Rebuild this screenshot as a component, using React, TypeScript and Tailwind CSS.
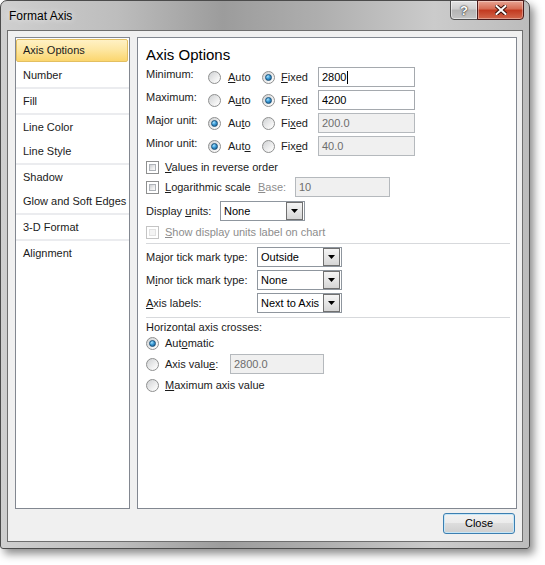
import React from 'react';

// underline the access key of a label, Windows style
const Acc = ({ text, k }: { text: string; k: number }) => (
  <span>
    {text.slice(0, k)}
    <span className="underline underline-offset-[1px]">{text[k]}</span>
    {text.slice(k + 1)}
  </span>
);

const Radio = ({ checked }: { checked?: boolean }) => (
  <span className="inline-flex w-[13px] h-[13px] shrink-0 items-center justify-center rounded-full border border-[#8e8f8f] bg-[linear-gradient(135deg,#cfd1d3_0%,#f4f4f4_70%,#ffffff_100%)]">
    {checked && (
      <span className="w-[7px] h-[7px] rounded-full border border-[#17507a] bg-[radial-gradient(circle_at_35%_30%,#a8e4ff_0%,#3a9ad6_45%,#124f80_100%)]" />
    )}
  </span>
);

const Check = ({ disabled }: { disabled?: boolean }) => (
  <span
    className={`inline-flex w-[13px] h-[13px] shrink-0 p-[2px] border bg-white ${
      disabled ? 'border-[#c4c4c4]' : 'border-[#8e8f8f]'
    }`}
  >
    <span
      className={`w-full h-full ${
        disabled
          ? 'bg-[#f4f4f4] border border-[#e2e2e2]'
          : 'border border-[#aeb2b8] bg-[linear-gradient(135deg,#cdd0d4_0%,#eeeeee_60%,#fbfbfb_100%)]'
      }`}
    />
  </span>
);

const TextBox = ({ value, w, disabled, caret }: { value: string; w: string; disabled?: boolean; caret?: boolean }) => (
  <div
    className={`${w} h-[20px] flex items-center pl-[3px] border ${
      disabled ? 'bg-[#f0f0f0] border-[#b5b9bd] text-[#6d6d6d]' : 'bg-white border-[#a5a9ae] text-black'
    }`}
  >
    {value}
    {caret && <span className="ml-[1px] w-px h-[13px] bg-black" />}
  </div>
);

const Combo = ({ value }: { value: string }) => (
  <div className="w-[85px] h-[20px] flex items-center border border-[#8f969e] bg-white">
    <span className="flex-1 pl-[3px] text-black">{value}</span>
    <span className="w-[17px] h-[18px] mr-px flex items-center justify-center border border-[#707070] bg-[linear-gradient(#f4f4f4_0%,#e6e6e6_50%,#d6d6d6_100%)]">
      <svg width="7" height="4" viewBox="0 0 7 4">
        <path d="M0 0h7L3.5 4z" fill="#000" />
      </svg>
    </span>
  </div>
);

const navItems: { name: string; sep?: boolean }[] = [
  { name: 'Axis Options' },
  { name: 'Number', sep: true },
  { name: 'Fill', sep: true },
  { name: 'Line Color' },
  { name: 'Line Style', sep: true },
  { name: 'Shadow' },
  { name: 'Glow and Soft Edges', sep: true },
  { name: '3-D Format', sep: true },
  { name: 'Alignment' },
];

const MinMaxRow = ({
  label,
  autoKey,
  fixedKey,
  fixed,
  value,
}: {
  label: string;
  autoKey: number;
  fixedKey: number;
  fixed: boolean;
  value: string;
}) => (
  <div className="flex items-center h-[20px] mt-[3px]">
    <span className="w-[62px] pb-[6px]">{label}</span>
    <div className="w-[54px] flex items-center">
      <Radio checked={!fixed} />
      <span className="ml-[7px]">
        <Acc text="Auto" k={autoKey} />
      </span>
    </div>
    <div className="w-[56px] flex items-center">
      <Radio checked={fixed} />
      <span className="ml-[6px]">
        <Acc text="Fixed" k={fixedKey} />
      </span>
    </div>
    <TextBox value={value} w="w-[97px]" disabled={!fixed} caret={value === '2800'} />
  </div>
);

export default function App() {
  return (
    <div className="w-[545px] h-[565px] bg-white font-[family-name:'Liberation_Sans',Arial,sans-serif] text-[11px] text-[#1b1b1b] leading-none">
      <div className="w-[530px] h-[549px] flex flex-col rounded-t-[7px] rounded-b-[3px] border border-[#4b4b4b] shadow-[4px_5px_8px_rgba(0,0,0,0.45)] bg-[linear-gradient(90deg,#cfcfcf_0%,#bdbdbd_22%,#9c9c9c_42%,#aeaeae_60%,#cbcbcb_82%,#bcbcbc_100%)]">
        {/* title bar */}
        <div className="h-[29px] flex items-start justify-between">
          <span className="pl-[8px] pt-[9px] text-[12px] text-black [text-shadow:0_0_6px_rgba(255,255,255,0.95)]">
            Format Axis
          </span>
          <div className="flex mr-[5px] -mt-px">
            <div className="w-[28px] h-[20px] flex items-center justify-center rounded-bl-[4px] border border-[#505050] bg-[linear-gradient(#e4e4e4_0%,#cdcdcd_45%,#b4b4b4_50%,#c4c4c4_100%)] shadow-[inset_0_0_0_1px_rgba(255,255,255,0.5)]">
              <span className="text-[13px] font-bold text-white [text-shadow:0_0_2px_#333,0_0_1px_#000]">?</span>
            </div>
            <div className="w-[47px] h-[20px] -ml-px flex items-center justify-center rounded-br-[4px] border border-[#4a1a1a] bg-[linear-gradient(#e8a493_0%,#d56a52_45%,#c2381f_50%,#d2674c_100%)] shadow-[inset_0_0_0_1px_rgba(255,255,255,0.35)]">
              <svg width="12" height="10" viewBox="0 0 12 10">
                <path d="M1.5 1 L10.5 9 M10.5 1 L1.5 9" stroke="#3a0f08" strokeWidth="4" strokeLinecap="square" />
                <path d="M1.5 1 L10.5 9 M10.5 1 L1.5 9" stroke="#ffffff" strokeWidth="2" strokeLinecap="square" />
              </svg>
            </div>
          </div>
        </div>

        {/* client area */}
        <div className="flex-1 mx-[6px] mb-[6px] border border-[#6e6e6e] bg-[#f0f0f0] flex flex-col pt-[6px] pl-[7px] pr-[5px]">
          <div className="flex gap-[7px] h-[472px]">
            {/* nav */}
            <div className="w-[115px] border border-[#828790] bg-white">
              {navItems.map((item, i) => (
                <React.Fragment key={item.name}>
                  {i === 0 ? (
                    <div className="h-[25px] pt-px pr-px">
                      <div className="h-[23px] flex items-center pl-[6px] rounded-[2px] border border-[#e3bf61] bg-[linear-gradient(#fff1c4_0%,#fde7a3_45%,#fbd66e_100%)]">
                        {item.name}
                      </div>
                    </div>
                  ) : (
                    <div className="h-[24px] flex items-center pl-[7px]">{item.name}</div>
                  )}
                  {item.sep && <div className="h-[2px] bg-[#ebecef]" />}
                </React.Fragment>
              ))}
            </div>

            {/* options panel */}
            <div className="w-[380px] border border-[#828790] bg-white pl-[8px]">
              <div className="h-[20px] mt-[6px] flex items-center text-[15px] text-black">Axis Options</div>

              <MinMaxRow label="Minimum:" autoKey={0} fixedKey={0} fixed value="2800" />
              <MinMaxRow label="Maximum:" autoKey={1} fixedKey={1} fixed value="4200" />
              <MinMaxRow label="Major unit:" autoKey={2} fixedKey={2} fixed={false} value="200.0" />
              <MinMaxRow label="Minor unit:" autoKey={3} fixedKey={3} fixed={false} value="40.0" />

              <div className="flex items-center h-[20px] mt-px">
                <Check />
                <span className="ml-[6px]">
                  <Acc text="Values in reverse order" k={0} />
                </span>
              </div>
              <div className="flex items-center h-[20px]">
                <div className="w-[112px] flex items-center">
                  <Check />
                  <span className="ml-[6px]">
                    <Acc text="Logarithmic scale" k={0} />
                  </span>
                </div>
                <span className="w-[37px] text-[#8d8d8d]">
                  <Acc text="Base:" k={0} />
                </span>
                <TextBox value="10" w="w-[95px]" disabled />
              </div>
              <div className="flex items-center h-[20px] mt-[4px]">
                <span className="w-[74px]">
                  Display <Acc text="units:" k={0} />
                </span>
                <Combo value="None" />
              </div>
              <div className="flex items-center h-[20px] mt-px text-[#8d8d8d]">
                <Check disabled />
                <span className="ml-[6px]">
                  <Acc text="Show display units label on chart" k={0} />
                </span>
              </div>

              <div className="h-px mt-px mr-[6px] bg-[#d7d9dc]" />

              <div className="flex items-center h-[20px] mt-[3px]">
                <span className="w-[111px]">
                  <Acc text="Major tick mark type:" k={2} />
                </span>
                <Combo value="Outside" />
              </div>
              <div className="flex items-center h-[20px] mt-[3px]">
                <span className="w-[111px]">
                  <Acc text="Minor tick mark type:" k={1} />
                </span>
                <Combo value="None" />
              </div>
              <div className="flex items-center h-[20px] mt-[3px]">
                <span className="w-[111px]">
                  <Acc text="Axis labels:" k={0} />
                </span>
                <Combo value="Next to Axis" />
              </div>

              <div className="h-px mt-[4px] mr-[6px] bg-[#d7d9dc]" />

              <div className="flex items-center h-[16px] mt-px">Horizontal axis crosses:</div>
              <div className="flex items-center h-[16px]">
                <Radio checked />
                <span className="ml-[6px]">
                  <Acc text="Automatic" k={3} />
                </span>
              </div>
              <div className="flex items-center h-[20px] mt-[3px]">
                <div className="w-[84px] flex items-center">
                  <Radio />
                  <span className="ml-[6px]">
                    <Acc text="Axis value:" k={9} />
                  </span>
                </div>
                <TextBox value="2800.0" w="w-[94px]" disabled />
              </div>
              <div className="flex items-center h-[16px] mt-[3px]">
                <Radio />
                <span className="ml-[6px]">
                  <Acc text="Maximum axis value" k={0} />
                </span>
              </div>
            </div>
          </div>

          <div className="flex justify-end mt-[4px] mr-[2px]">
            <button className="w-[72px] h-[21px] rounded-[3px] border border-[#3c7fb1] bg-[linear-gradient(#f2f2f2_0%,#ebebeb_50%,#dddddd_50%,#cfcfcf_100%)] shadow-[inset_0_0_0_1px_#c6e6f7] text-[11px] text-black">
              Close
            </button>
          </div>
        </div>
      </div>
    </div>
  );
}
